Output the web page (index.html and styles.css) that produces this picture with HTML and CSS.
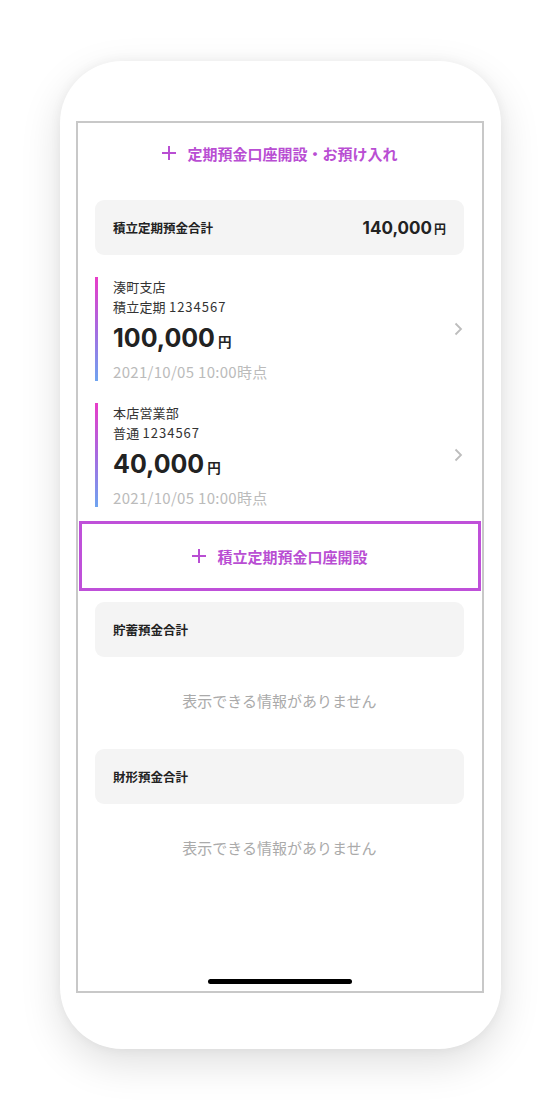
FILE: index.html
```html
<!DOCTYPE html>
<html lang="ja">
<head>
<meta charset="utf-8">
<title>積立定期預金</title>
<link rel="stylesheet" href="styles.css">
</head>
<body>
<div class="phone">
  <div class="screen">
    <a class="add-link top-link" href="#">
      <svg class="plus" width="14" height="14" viewBox="0 0 14 14"><path d="M7 0V14M0 7H14" stroke="currentColor" stroke-width="2" fill="none"/></svg>
      <span>定期預金口座開設・お預け入れ</span>
    </a>
    <div class="content top-content">
      <div class="total-card">
        <span class="total-label">積立定期預金合計</span>
        <span class="total-value"><span class="num-s">140,000</span><span class="yen-s">円</span></span>
      </div>
      <div class="accounts">
        <a class="account" href="#">
          <div class="account-info">
            <div class="line">湊町支店</div>
            <div class="line">積立定期 <span class="digits">1234567</span></div>
            <div class="amount"><span class="num">100,000</span><span class="yen">円</span></div>
            <div class="date">2021/10/05 10:00時点</div>
          </div>
          <svg class="chev" width="9" height="14" viewBox="0 0 9 14"><path d="M1.5 1.5L7 7L1.5 12.5" stroke="currentColor" stroke-width="1.8" fill="none"/></svg>
        </a>
        <a class="account" href="#">
          <div class="account-info">
            <div class="line">本店営業部</div>
            <div class="line">普通 <span class="digits">1234567</span></div>
            <div class="amount"><span class="num">40,000</span><span class="yen">円</span></div>
            <div class="date">2021/10/05 10:00時点</div>
          </div>
          <svg class="chev" width="9" height="14" viewBox="0 0 9 14"><path d="M1.5 1.5L7 7L1.5 12.5" stroke="currentColor" stroke-width="1.8" fill="none"/></svg>
        </a>
      </div>
    </div>
    <a class="add-link open-btn" href="#">
      <svg class="plus" width="14" height="14" viewBox="0 0 14 14"><path d="M7 0V14M0 7H14" stroke="currentColor" stroke-width="2" fill="none"/></svg>
      <span>積立定期預金口座開設</span>
    </a>
    <div class="content">
      <div class="total-card first-gray">
        <span class="total-label">貯蓄預金合計</span>
      </div>
      <p class="empty">表示できる情報がありません</p>
      <div class="total-card">
        <span class="total-label">財形預金合計</span>
      </div>
      <p class="empty">表示できる情報がありません</p>
    </div>
    <div class="home-indicator"></div>
  </div>
</div>
</body>
</html>
```

FILE: styles.css
```css
* { box-sizing: border-box; }

html, body {
  margin: 0;
  padding: 0;
  background: #ffffff;
}

body {
  font-family: "Noto Sans CJK JP", "Noto Sans", sans-serif;
  color: #222;
  width: 560px;
  height: 1108px;
  overflow: hidden;
}

.phone {
  margin: 61px 0 0 60px;
  width: 441px;
  height: 988px;
  background: #fff;
  border-radius: 62px;
  box-shadow: 0 14px 40px rgba(0, 0, 0, 0.13), 0 0 12px rgba(0, 0, 0, 0.05);
  padding: 60px 0 0 16px;
}

.screen {
  width: 408px;
  height: 872px;
  border: 2px solid #c8c8c8;
  background: #fff;
  display: flex;
  flex-direction: column;
}

.add-link {
  display: flex;
  align-items: center;
  justify-content: center;
  gap: 11px;
  color: #b94ed3;
  text-decoration: none;
  font-size: 15px;
  font-weight: 700;
  letter-spacing: 0;
}

.plus { display: block; flex: none; }

.top-link {
  height: 60px;
}

.content {
  padding: 0 18px 0 17px;
}

.top-content { margin-top: 17px; }

.total-card {
  height: 55px;
  background: #f4f4f4;
  border-radius: 9px;
  display: flex;
  align-items: center;
  justify-content: space-between;
  padding: 0 18px;
}

.first-gray { margin-top: 11px; }

.total-label {
  font-size: 12.5px;
  font-weight: 700;
  color: #222;
}

.total-value {
  display: flex;
  align-items: baseline;
}

.num-s {
  font-family: "Inter", "Liberation Sans", sans-serif;
  font-weight: 700;
  font-size: 17px;
  color: #222;
}

.yen-s {
  font-size: 12px;
  font-weight: 700;
  margin-left: 2px;
  color: #222;
}

.accounts {
  margin-top: 22px;
  display: flex;
  flex-direction: column;
  gap: 22px;
}

.account {
  display: flex;
  align-items: center;
  justify-content: space-between;
  text-decoration: none;
  color: inherit;
  padding-left: 18px;
  background: linear-gradient(180deg, #e83cc8 0%, #a76ae0 50%, #6ea4f0 100%) left top / 3px 100% no-repeat;
}

.account-info {
  display: flex;
  flex-direction: column;
}

.line {
  font-size: 13px;
  line-height: 20px;
  color: #333;
  letter-spacing: 0.2px;
}

.digits {
  letter-spacing: 1px;
}

.amount {
  margin-top: 4px;
  height: 34px;
  display: flex;
  align-items: baseline;
  line-height: 34px;
}

.num {
  font-family: "Inter", "Liberation Sans", sans-serif;
  font-weight: 700;
  font-size: 25px;
  color: #222;
}

.yen {
  font-size: 13.5px;
  font-weight: 700;
  margin-left: 3px;
  color: #222;
}

.date {
  margin-top: 8px;
  font-size: 15px;
  line-height: 18px;
  color: #bbbbbb;
  letter-spacing: 0.3px;
}

.chev {
  color: #bdbdbd;
  display: block;
  margin-right: 1px;
}

.open-btn {
  margin: 14px 1px 0;
  height: 70px;
  border: 3px solid #bf50d9;
}

.empty {
  margin: 32px 0 36px;
  line-height: 24px;
  text-align: center;
  font-size: 15px;
  color: #aaaaaa;
}

.home-indicator {
  margin: auto auto 7px;
  width: 144px;
  height: 5px;
  border-radius: 3px;
  background: #000;
}
```
